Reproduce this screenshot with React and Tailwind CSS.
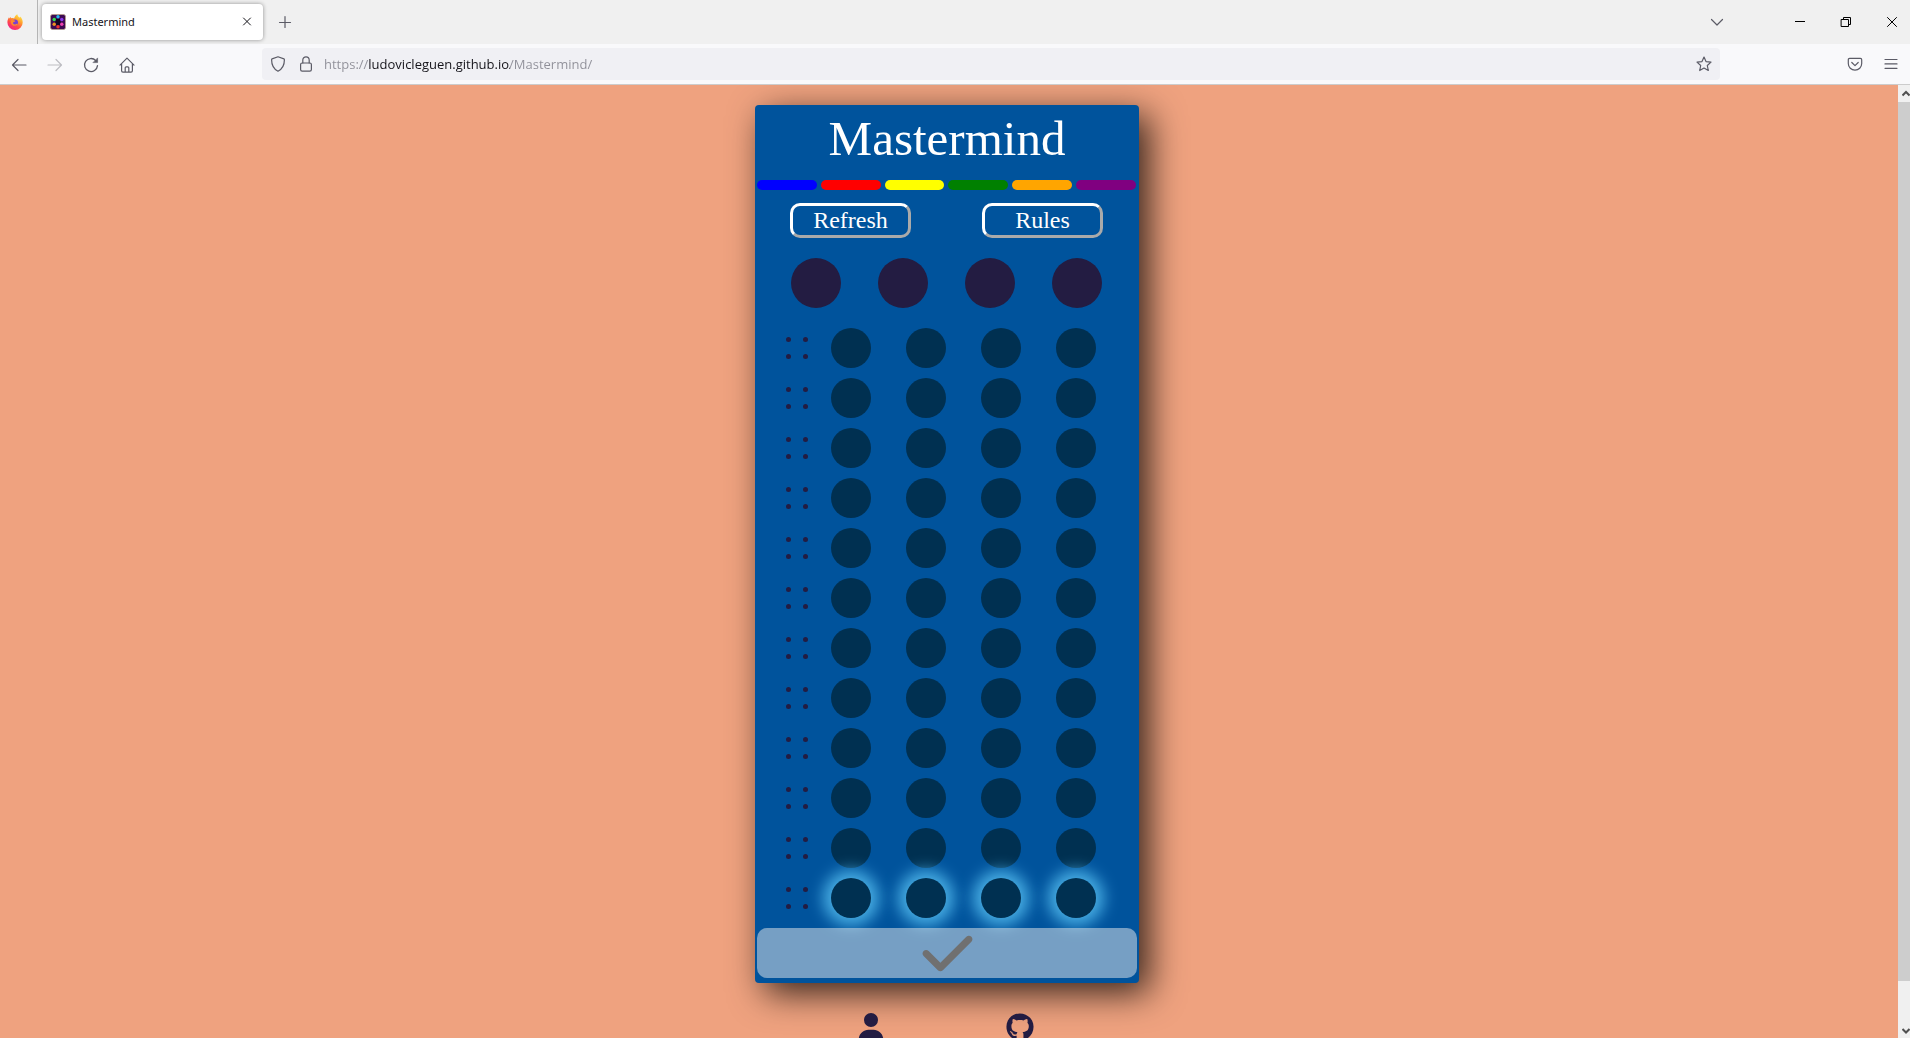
import { FaCheck, FaGithub, FaUser } from "react-icons/fa6";

const COLORS = ["bg-[#0000ff]", "bg-[#ff0000]", "bg-[#ffff00]", "bg-[#008000]", "bg-[#ffa500]", "bg-[#800080]"];
const ROWS = Array.from({ length: 12 }, (_, i) => i);
const FOUR = [0, 1, 2, 3];

function Glyph({ size = 16, children, className = "" }) {
  return (
    <svg
      width={size}
      height={size}
      viewBox="0 0 16 16"
      fill="none"
      stroke="currentColor"
      strokeWidth="1.2"
      strokeLinecap="round"
      strokeLinejoin="round"
      className={`shrink-0 ${className}`}
      aria-hidden="true"
    >
      {children}
    </svg>
  );
}

function FirefoxLogo() {
  return (
    <svg width="16" height="16" viewBox="0 0 16 16" aria-hidden="true">
      <defs>
        <linearGradient id="flame" x1="0.8" y1="0" x2="0.2" y2="1">
          <stop offset="0" stopColor="#fff14a" />
          <stop offset="0.35" stopColor="#ffa12e" />
          <stop offset="0.65" stopColor="#ff4a45" />
          <stop offset="1" stopColor="#f0189a" />
        </linearGradient>
      </defs>
      <path
        d="M10.3.3c.2 1.6 1.2 2.400 2.200 3.300.6-.1.700-.7.700-1.200 1.600 1.600 2.500 3.700 2.500 6A7.600 7.400 0 0 1 8 15.900 7.600 7.500 0 0 1 .4 8.300C.4 6.200 1.200 4.400 2 3.300l.5 1.200.9-1.600.8 1.300c1-.2 2-.1 2.900.3C7.600 2.900 8.700 1.100 10.300.3z"
        fill="url(#flame)"
      />
      <circle cx="8" cy="8.400" r="3" fill="#7a3fd0" />
      <path d="M4 6.300c1.600-.8 3.100-.4 4.400.7-.6 1-2 .9-2.400 1.500-.2 1.300 1 2.100 2.200 1.900 1-.1 1.600-.8 2.600-.5-.6 1.600-3.700 2.800-5.600 1.100C3.800 9.700 3.400 8 4 6.300z" fill="#ff8a2b" />
    </svg>
  );
}

function Favicon() {
  const dots = [
    [8, 2.800, "#22b8f0"], [4.2, 5.500, "#30e050"], [11.800, 5.500, "#8a3cf0"],
    [4.200, 10.200, "#f09020"], [11.800, 10.200, "#f040b0"], [8, 12.800, "#f03030"],
  ];
  return (
    <svg width="16" height="16" viewBox="0 0 16 16" aria-hidden="true">
      <rect x="0.500" y="0.500" width="15" height="15" rx="2" fill="#3d0a52" stroke="#b8a08c" strokeWidth="0.800" />
      <rect x="5.500" y="5" width="5" height="6" fill="#150322" />
      {dots.map(([x, y, c]) => (
        <circle key={c} cx={x} cy={y} r="1.700" fill={c} />
      ))}
    </svg>
  );
}

function TabBar() {
  return (
    <div className="flex h-11 items-center bg-[#f0f0f0]">
      <div className="flex h-full w-[38px] items-center justify-center border-r border-[#b5b5b5] pr-2">
        <FirefoxLogo />
      </div>
      <div className="ml-1 flex h-9 w-[221px] items-center rounded bg-white pr-2 pl-2 shadow-[0_0_4px_rgba(0,0,0,0.4)]">
        <Favicon />
        <span className="ml-1.5 flex-1 pt-px font-['Noto_Sans',sans-serif] text-[11px] text-[#15141a]">Mastermind</span>
        <button type="button" aria-label="Close tab" className="flex h-4 w-4 items-center justify-center text-[#15141a]">
          <Glyph>
            <path d="M4.500 4l7 7M11.500 4l-7 7" strokeWidth="1" />
          </Glyph>
        </button>
      </div>
      <button type="button" aria-label="New tab" className="ml-[14px] text-[#5b5b66]">
        <Glyph>
          <path d="M8 2.500v11M2.500 8.500h11" />
        </Glyph>
      </button>
      <div className="ml-auto flex items-center text-black">
        <button type="button" aria-label="List all tabs" className="mr-[67px] text-[#5b5b66]">
          <Glyph>
            <path d="M2.500 5.500L8 11l5.500-5.500" />
          </Glyph>
        </button>
        <button type="button" aria-label="Minimize" className="mr-[30px]">
          <Glyph>
            <path d="M3 7.500h10" strokeWidth="1" strokeLinecap="butt" />
          </Glyph>
        </button>
        <button type="button" aria-label="Restore" className="mr-[30px]">
          <Glyph>
            <path d="M3.500 5.500h7v7h-7zM5.500 5.500v-2h7v7h-2" strokeWidth="1" strokeLinejoin="miter" />
          </Glyph>
        </button>
        <button type="button" aria-label="Close" className="mr-[10px]">
          <Glyph>
            <path d="M3.500 3.500l9 9M12.500 3.500l-9 9" strokeWidth="1" />
          </Glyph>
        </button>
      </div>
    </div>
  );
}

function NavBar() {
  return (
    <div className="flex h-[41px] items-center border-b border-[#cccccc] bg-[#f9f9fb] text-[#5b5b66]">
      <div className="flex w-[262px] items-center gap-5 pt-px pl-[11px]">
        <button type="button" aria-label="Back">
          <Glyph>
            <path d="M15 8H1.500M7 2.500L1.500 8 7 13.500" />
          </Glyph>
        </button>
        <button type="button" aria-label="Forward" disabled className="text-[#bdbdc2]">
          <Glyph>
            <path d="M1 8h13.500M9 2.500L14.500 8 9 13.500" />
          </Glyph>
        </button>
        <button type="button" aria-label="Reload">
          <Glyph>
            <path d="M12.800 3.600A6.500 6.500 0 1 0 14.500 8.600" strokeWidth="1.300" />
            <path d="M14.600 1.300v4.300h-4.300z" fill="currentColor" strokeWidth="0.600" />
          </Glyph>
        </button>
        <button type="button" aria-label="Home">
          <Glyph>
            <path d="M1 8.200L8 1.200l7 7M2.600 7v6.800a1.300 1.300 0 0 0 1.300 1.300h8.200a1.300 1.300 0 0 0 1.300-1.300V7M6.200 15v-4.200a1 1 0 0 1 1-1h1.600a1 1 0 0 1 1 1V15" />
          </Glyph>
        </button>
      </div>
      <div className="flex h-8 flex-1 items-center rounded bg-[#f0f0f4] px-2">
        <Glyph>
          <path d="M8 .8l5.900 2.100c.3 0 .5.400.5.800 0 5.200-1.500 9-6.400 11.500C3.100 12.700 1.600 8.900 1.600 3.700c0-.4.200-.8.500-.8z" />
        </Glyph>
        <Glyph className="ml-3">
          <rect x="2.600" y="7" width="10.800" height="8.200" rx="1.600" />
          <path d="M4.800 7V4a3.200 3.200 0 0 1 6.400 0v3" />
        </Glyph>
        <input
          aria-label="Address"
          readOnly
          value="https://ludovicleguen.github.io/Mastermind/"
          className="ml-2.5 min-w-0 flex-1 bg-[linear-gradient(90deg,#8f8f98_45px,#15141a_45px,#15141a_186px,#8f8f98_186px)] bg-clip-text pt-0.5 text-[13px] text-transparent outline-none"
        />
        <button type="button" aria-label="Bookmark this page">
          <Glyph>
            <path d="M8 1l2 4.600 5 .5-3.700 3.400 1 5L8 12l-4.300 2.500 1-5L1 6.100l5-.5z" />
          </Glyph>
        </button>
      </div>
      <div className="flex items-center gap-5 pr-[11px] pl-[127px]">
        <button type="button" aria-label="Save to Pocket">
          <Glyph>
            <path d="M2.600 2.400h10.800a1.300 1.300 0 0 1 1.300 1.300v3.800a6.700 6.700 0 0 1-13.400 0V3.700a1.300 1.300 0 0 1 1.300-1.300z" />
            <path d="M4.800 6.500L8 9.600l3.200-3.100" />
          </Glyph>
        </button>
        <button type="button" aria-label="Open application menu">
          <Glyph>
            <path d="M2 3.500h12M2 7.900h12M2 12.300h12" />
          </Glyph>
        </button>
      </div>
    </div>
  );
}

function GuessRow({ active }) {
  return (
    <div className="flex h-[50px] items-center">
      <div className="mr-[23px] ml-[31px] grid grid-cols-2 gap-3">
        {FOUR.map((i) => (
          <span key={i} className="h-[5px] w-[5px] rounded-full bg-[#231c42]" />
        ))}
      </div>
      <div className="flex gap-[35px]">
        {FOUR.map((i) =>
          active ? (
            <button
              key={i}
              type="button"
              aria-label={`Slot ${i + 1}`}
              className="h-10 w-10 rounded-full bg-[#003051] shadow-[0_0_15px_8px_#47ade3]"
            />
          ) : (
            <span key={i} className="h-10 w-10 rounded-full bg-[#003051]" />
          ),
        )}
      </div>
    </div>
  );
}

function Board() {
  return (
    <section className="w-96 rounded bg-[#00539c] pb-[5px] font-['Liberation_Serif',serif] text-white shadow-[10px_10px_35px_rgba(0,0,0,0.78)]">
      <h1 className="h-[75px] pt-1 text-center text-[49px] leading-[60px]">Mastermind</h1>
      <div className="grid grid-cols-6 gap-1 pr-[3px] pl-0.5">
        {COLORS.map((c) => (
          <div key={c} className={`h-2.5 rounded-full ${c}`} />
        ))}
      </div>
      <div className="mt-[13px] flex justify-between pr-9 pl-[35px]">
        {["Refresh", "Rules"].map((label) => (
          <button
            key={label}
            type="button"
            className="h-[35px] w-[121px] rounded-[10px] border-3 border-t-white border-r-[#aaaaaa] border-b-[#aaaaaa] border-l-white pb-0.5 text-2xl leading-7"
          >
            {label}
          </button>
        ))}
      </div>
      <div className="mt-5 flex gap-[37px] pl-9">
        {FOUR.map((i) => (
          <span key={i} className="h-[50px] w-[50px] rounded-full bg-[#231c42]" />
        ))}
      </div>
      <div className="mt-[15px]">
        {ROWS.map((r) => (
          <GuessRow key={r} active={r === 11} />
        ))}
      </div>
      <div className="mt-[5px] px-0.5">
        <button
          type="button"
          aria-label="Validate"
          className="relative flex h-[50px] w-full items-center justify-center rounded-[10px] bg-[#ebebeb]/50 text-[#707070]"
        >
          <FaCheck size={57} />
        </button>
      </div>
    </section>
  );
}

function Scrollbar() {
  return (
    <div className="flex w-3 shrink-0 flex-col items-end bg-[#f0f0f0] text-[#505050]" aria-hidden="true">
      <svg width="8" height="17" viewBox="0 0 8 17" fill="none" stroke="currentColor" strokeWidth="2">
        <path d="M.5 10.500l3.500-3.500 3.500 3.500" />
      </svg>
      <div className="w-full flex-1 bg-[#cdcdcd]" />
      <div className="h-10" />
      <svg width="8" height="17" viewBox="0 0 8 17" fill="none" stroke="currentColor" strokeWidth="2">
        <path d="M.5 8l3.500 3.500L7.500 8" />
      </svg>
    </div>
  );
}

export default function App() {
  return (
    <div className="flex h-screen flex-col overflow-hidden font-['Open_Sans',sans-serif]">
      <header>
        <TabBar />
        <NavBar />
      </header>
      <div className="flex min-h-0 flex-1">
        <main className="flex min-w-0 flex-1 flex-col items-center overflow-hidden bg-[#efa27f] pt-5 pr-1">
          <Board />
          <footer className="mt-[30px] flex gap-[121px] pr-[3px] text-[#231c42]">
            <a href="#portfolio" aria-label="Portfolio">
              <FaUser size={28} />
            </a>
            <a href="#github" aria-label="GitHub">
              <FaGithub size={28} />
            </a>
          </footer>
        </main>
        <Scrollbar />
      </div>
    </div>
  );
}
